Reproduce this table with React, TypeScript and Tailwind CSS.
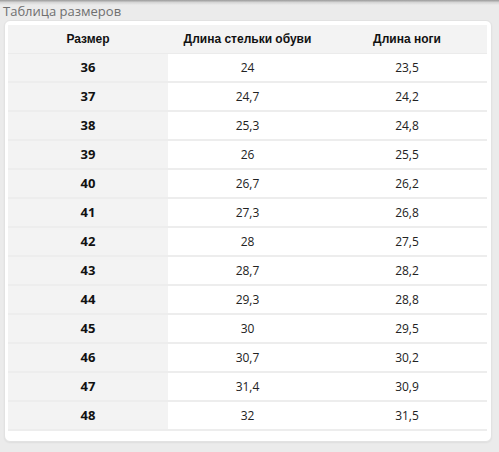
import React from "react";

const rows: [string, string, string][] = [
  ["36", "24", "23,5"],
  ["37", "24,7", "24,2"],
  ["38", "25,3", "24,8"],
  ["39", "26", "25,5"],
  ["40", "26,7", "26,2"],
  ["41", "27,3", "26,8"],
  ["42", "28", "27,5"],
  ["43", "28,7", "28,2"],
  ["44", "29,3", "28,8"],
  ["45", "30", "29,5"],
  ["46", "30,7", "30,2"],
  ["47", "31,4", "30,9"],
  ["48", "32", "31,5"],
];

export default function App() {
  return (
    <div className="w-[499px] h-[452px] bg-[#ebebeb] overflow-hidden relative">
      <div className="h-[5px] bg-gradient-to-b from-[#9a9a9a] via-[#d6d6d6] to-[#ebebeb]" />
      <div className="pl-[3px] h-[15px] leading-[13px] text-[13px] text-[#6f6f6f] font-['Open_Sans',sans-serif]">
        Таблица размеров
      </div>
      <div className="ml-[4px] w-[488px] h-[422px] bg-white rounded-[6px] border border-[#e2e2e2] pt-[4px] px-[3px] shadow-[0_1px_2px_rgba(0,0,0,0.06)]">
        <div className="w-[479px] flex flex-col">
          <div className="grid grid-cols-[160px_159px_160px] h-[29px] bg-[#f3f3f3] border-b border-[#ebebeb] items-center text-[12px] font-bold text-[#111] font-['Liberation_Sans',Arial,sans-serif]">
            <div className="text-center">Размер</div>
            <div className="text-center">Длина стельки обуви</div>
            <div className="text-center">Длина ноги</div>
          </div>
          {rows.map((r) => (
            <div
              key={r[0]}
              className="grid grid-cols-[160px_159px_160px] h-[29px] border-b-2 border-[#ededed]"
            >
              <div className="bg-[#f3f3f3] flex items-center justify-center text-[13px] font-bold text-[#111] font-['Open_Sans',sans-serif]">
                {r[0]}
              </div>
              <div className="flex items-center justify-center text-[12px] text-[#222] font-['Open_Sans',sans-serif]">
                {r[1]}
              </div>
              <div className="flex items-center justify-center text-[12px] text-[#222] font-['Open_Sans',sans-serif]">
                {r[2]}
              </div>
            </div>
          ))}
        </div>
      </div>
    </div>
  );
}
